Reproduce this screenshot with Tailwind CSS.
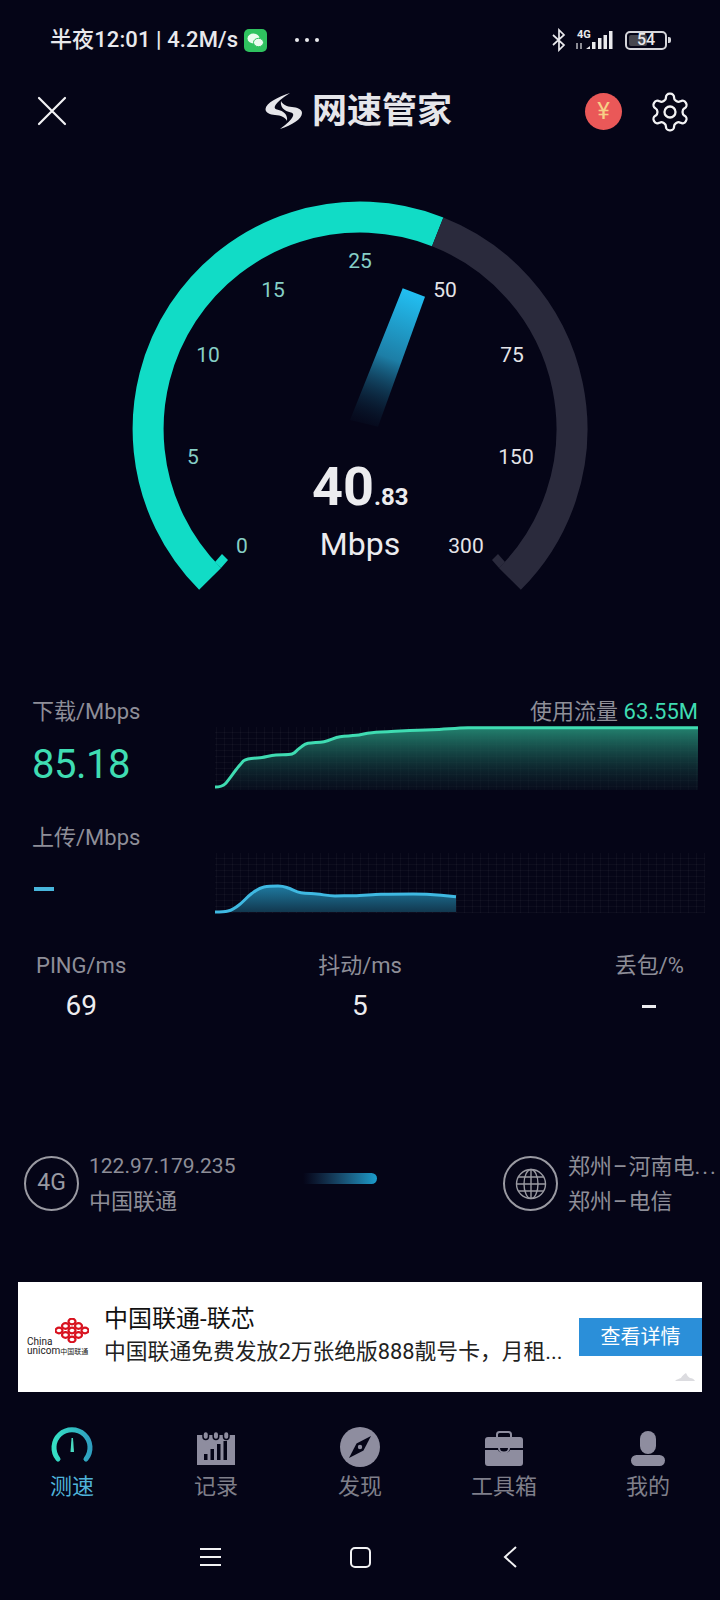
<!DOCTYPE html>
<html lang="zh-CN">
<head>
  <meta charset="UTF-8" />
  <meta name="viewport" content="width=device-width, initial-scale=1.0" />
  <title>网速管家</title>
  <script src="https://cdn.jsdelivr.net/npm/@tailwindcss/browser@4"></script>
</head>

<body class="bg-[#050517] font-['Roboto','Noto_Sans_CJK_SC',sans-serif]">
  <div class="w-[720px] h-[1600px] overflow-hidden flex flex-col">

    <!-- Status bar -->
    <div class="h-[80px] flex items-center pl-[50px] pr-[49px] text-[#e9e9ec]">
      <span class="text-[22px] font-medium leading-none whitespace-nowrap tracking-[0.1px]">半夜12:01 | 4.2M/s</span>
      <svg class="ml-[6px]" width="23" height="23" viewBox="0 0 23 23">
        <rect width="23" height="23" rx="5" fill="#2fc25f" />
        <ellipse cx="9.500" cy="9.500" rx="6" ry="5" fill="#eafbee" />
        <ellipse cx="14.500" cy="13.500" rx="5" ry="4.200" fill="#eafbee" stroke="#2fc25f" />
      </svg>
      <div class="ml-[28px] flex gap-[6px]">
        <span class="w-[4px] h-[4px] rounded-full bg-[#e9e9ec]"></span>
        <span class="w-[4px] h-[4px] rounded-full bg-[#e9e9ec]"></span>
        <span class="w-[4px] h-[4px] rounded-full bg-[#e9e9ec]"></span>
      </div>
      <div class="ml-auto flex items-center">
        <svg width="24" height="24" viewBox="0 0 24 24" fill="none" stroke="#e9e9ec" stroke-width="1.700">
          <path d="m6 7 11 10-5 5V2l5 5L6 17" />
        </svg>
        <svg class="ml-[3px]" width="40" height="22" viewBox="576 28 40 22">
          <text x="579" y="37" font-size="11" font-weight="700" fill="#e9e9ec">4G</text>
          <path d="M579 42v6M583 42v6" stroke="#b9b9c0" stroke-width="1.500" />
          <path d="M588 48h4v-3zM594 48h3.500v-7h-3.500zM600 48h3.500v-11h-3.500zM605.500 48h3.500v-14h-3.500zM611 48h3.500v-18h-3.500z" fill="#e9e9ec" />
        </svg>
        <div class="ml-[11px] relative w-[42px] h-[19px] rounded-[5px] border-2 border-[#d5d5da] flex items-center justify-center">
          <span class="absolute left-[2px] top-[2px] bottom-[2px] w-[18px] rounded-[2px] bg-[#46464e]"></span>
          <span class="relative text-[16px] font-medium leading-none">54</span>
        </div>
        <span class="ml-[1px] w-[3px] h-[6px] rounded-r-[2px] bg-[#d5d5da]"></span>
      </div>
    </div>

    <!-- Header -->
    <header class="h-[62px] flex items-center relative pl-[37px] pr-[28px]">
      <svg width="30" height="30" viewBox="0 0 30 30" fill="none" stroke="#f2f2f4" stroke-width="2.200" stroke-linecap="round">
        <path d="M2 2 28 28M28 2 2 28" />
      </svg>
      <div class="absolute left-[265px] top-[13px] flex items-center">
        <svg width="38" height="36" viewBox="265 93 38 36" fill="#e6e6ea">
          <path d="M290 93C278 97 266 103 265.500 109C265.500 113 270 114.500 275 115C281 115.500 285 117 287 121C288 115 284 111 277 109.500C273 108.500 273 104 290 93Z" />
          <path d="M280 129C292 125 302 119 302 113C302 109 297 107.500 292 107C287 106.500 283 105 281 101C280 107 284 111 291 112.500C295 113.500 295 118 280 129Z" />
        </svg>
        <span class="ml-[9px] text-[35px] font-bold leading-none text-[#e6e6ea] whitespace-nowrap">网速管家</span>
      </div>
      <div class="ml-auto flex items-center">
        <span class="w-[37px] h-[37px] rounded-full bg-[#ea5858] flex items-center justify-center text-[24px] leading-none text-[#f7cf86]">¥</span>
        <svg class="ml-[26px] mt-[2px]" width="44" height="44" viewBox="0 0 24 24" fill="none" stroke="#f2f2f4" stroke-width="1.250" stroke-linejoin="round">
          <path d="M12.220 2h-.44a2 2 0 0 0-2 2v.18a2 2 0 0 1-1 1.730l-.43.25a2 2 0 0 1-2 0l-.15-.08a2 2 0 0 0-2.730.73l-.22.38a2 2 0 0 0 .73 2.730l.15.1a2 2 0 0 1 1 1.720v.51a2 2 0 0 1-1 1.740l-.15.09a2 2 0 0 0-.73 2.730l.22.38a2 2 0 0 0 2.730.73l.15-.08a2 2 0 0 1 2 0l.43.25a2 2 0 0 1 1 1.730V20a2 2 0 0 0 2 2h.44a2 2 0 0 0 2-2v-.18a2 2 0 0 1 1-1.730l.43-.25a2 2 0 0 1 2 0l.15.08a2 2 0 0 0 2.730-.73l.22-.39a2 2 0 0 0-.73-2.730l-.15-.08a2 2 0 0 1-1-1.740v-.5a2 2 0 0 1 1-1.740l.15-.09a2 2 0 0 0 .73-2.730l-.22-.38a2 2 0 0 0-2.730-.73l-.15.08a2 2 0 0 1-2 0l-.43-.25a2 2 0 0 1-1-1.730V4a2 2 0 0 0-2-2z" />
          <circle cx="12" cy="12" r="3" />
        </svg>
      </div>
    </header>

    <!-- Gauge -->
    <svg class="mt-[48px] shrink-0" width="720" height="410" viewBox="0 190 720 410">
      <defs>
        <linearGradient id="needle" gradientUnits="userSpaceOnUse" x1="414" y1="292" x2="364" y2="424">
          <stop offset="0" stop-color="#22bff2" />
          <stop offset="0.5" stop-color="#1d7ea6" />
          <stop offset="1" stop-color="#0a1a30" stop-opacity="0.2" />
        </linearGradient>
      </defs>
      <path d="M210.100 578.900A212 212 0 0 1 437.700 231.800" fill="none" stroke="#11dcc6" stroke-width="31" />
      <path d="M437.700 231.800A212 212 0 0 1 509.900 578.900" fill="none" stroke="#2a2a3c" stroke-width="31" />
      <path d="M221 568 228 560 222 554 215 562Z" fill="#11dcc6" />
      <path d="M499 568 492 560 498 554 505 562Z" fill="#2a2a3c" />
      <polygon points="402.700,288.300 425,296.700 378,426.700 350,420" fill="url(#needle)" />
      <g font-size="21" text-anchor="middle" fill="#86cfc6">
        <text x="242" y="553">0</text>
        <text x="193" y="464">5</text>
        <text x="208" y="362">10</text>
        <text x="273" y="297">15</text>
        <text x="360" y="268">25</text>
      </g>
      <g font-size="21" text-anchor="middle" fill="#e4e4e8">
        <text x="445" y="297">50</text>
        <text x="512" y="362">75</text>
        <text x="516" y="464">150</text>
        <text x="466" y="553">300</text>
      </g>
      <text x="312" y="505" font-size="54" font-weight="700" fill="#ececef">40<tspan font-size="24">.83</tspan></text>
      <text x="360" y="555" font-size="32" text-anchor="middle" fill="#ececef">Mbps</text>
    </svg>

    <!-- Download -->
    <section class="mt-[100px] h-[90px] flex shrink-0">
      <div class="w-[215px] pl-[32px]">
        <div class="text-[22px] leading-[24px] text-[#8e8e98]">下载/Mbps</div>
        <div class="mt-[17px] text-[40px] leading-[48px] tracking-[-0.5px] text-[#3fdcb2]">85.18</div>
      </div>
      <div class="w-[483px]">
        <div class="text-right text-[22px] leading-[24px] text-[#8e8e98] whitespace-nowrap">使用流量 <span class="text-[#3fdcb2]">63.55M</span></div>
        <svg class="mt-[3px] overflow-visible" width="483" height="63" viewBox="215 727 483 63">
          <defs>
            <pattern id="grid1" width="8" height="6" patternUnits="userSpaceOnUse">
              <path d="M8 0H0V6" fill="none" stroke="#ffffff" stroke-opacity="0.06" />
            </pattern>
            <linearGradient id="fill1" x1="0" y1="0" x2="0" y2="1">
              <stop offset="0" stop-color="#23826f" />
              <stop offset="1" stop-color="#0b1824" stop-opacity="0.4" />
            </linearGradient>
          </defs>
          <rect x="215" y="727" width="483" height="63" fill="url(#grid1)" />
          <path d="M215 787C219 787 222 787 225 784S234 772 239 766 244 760 248 759 258 758 262 757.500 270 755.500 276 755 288 755 292 754 296 750.500 298.500 749 304 744 308 743.300 318 742.500 324 741.700 334 737.500 340 736.700 350 736 356 735.300 364 733.500 372 732.700 390 731.500 400 731 420 730 432 729.700 455 728 468 727.700H698V790H215Z" fill="url(#fill1)" />
          <path d="M215 787C219 787 222 787 225 784S234 772 239 766 244 760 248 759 258 758 262 757.500 270 755.500 276 755 288 755 292 754 296 750.500 298.500 749 304 744 308 743.300 318 742.500 324 741.700 334 737.500 340 736.700 350 736 356 735.300 364 733.500 372 732.700 390 731.500 400 731 420 730 432 729.700 455 728 468 727.700H698" fill="none" stroke="#3fdcb2" stroke-width="3" />
        </svg>
      </div>
    </section>

    <!-- Upload -->
    <section class="mt-[36px] h-[87px] flex shrink-0">
      <div class="w-[215px] pl-[32px]">
        <div class="text-[22px] leading-[24px] text-[#8e8e98]">上传/Mbps</div>
        <div class="mt-[37px] ml-[2px] w-[20px] h-[4px] bg-[#48b6dc]"></div>
      </div>
      <svg class="mt-[27px] overflow-visible" width="490" height="60" viewBox="215 853 490 60">
        <defs>
          <pattern id="grid2" width="8" height="6" patternUnits="userSpaceOnUse">
            <path d="M8 0H0V6" fill="none" stroke="#ffffff" stroke-opacity="0.06" />
          </pattern>
          <linearGradient id="fill2" x1="0" y1="0" x2="0" y2="1">
            <stop offset="0" stop-color="#1f7aa0" />
            <stop offset="1" stop-color="#12384f" />
          </linearGradient>
        </defs>
        <rect x="215" y="853" width="490" height="60" fill="url(#grid2)" />
        <path d="M215 912C221 912 224 912 228 911S234 909 239 905 247 897 252 893.300 259 888 264 887 272 886 278 886 285 887 289 888.300 296 892 301 892.700 311 893.500 317 894 328 896 335 896 346 895.700 354 895.700 372 894.500 381 894.300 403 894 413 894 432 894.500 441 895.300L456 896.700V912Z" fill="url(#fill2)" />
        <path d="M215 912C221 912 224 912 228 911S234 909 239 905 247 897 252 893.300 259 888 264 887 272 886 278 886 285 887 289 888.300 296 892 301 892.700 311 893.500 317 894 328 896 335 896 346 895.700 354 895.700 372 894.500 381 894.300 403 894 413 894 432 894.500 441 895.300L456 896.700" fill="none" stroke="#3fb9e2" stroke-width="3" />
      </svg>
    </section>

    <!-- Ping / jitter / loss -->
    <section class="mt-[41px] px-[36px] grid grid-cols-3 shrink-0">
      <div class="justify-self-start flex flex-col items-center">
        <div class="text-[22px] leading-[24px] text-[#8e8e98]">PING/ms</div>
        <div class="mt-[10px] text-[28px] leading-[36px] text-[#ececef]">69</div>
      </div>
      <div class="justify-self-center flex flex-col items-center">
        <div class="text-[22px] leading-[24px] text-[#8e8e98]">抖动/ms</div>
        <div class="mt-[10px] text-[28px] leading-[36px] text-[#ececef]">5</div>
      </div>
      <div class="justify-self-end flex flex-col items-center">
        <div class="text-[22px] leading-[24px] text-[#8e8e98]">丢包/%</div>
        <div class="mt-[10px] h-[36px] flex items-center"><span class="block w-[14px] h-[3px] bg-[#ececef]"></span></div>
      </div>
    </section>

    <!-- Client / server -->
    <section class="mt-[132px] h-[55px] flex items-center shrink-0 text-[21px] text-[#8e8e98] whitespace-nowrap">
      <div class="w-[303px] pl-[24px] flex items-center">
        <div class="w-[55px] h-[55px] rounded-full border-2 border-[#9a9aa2] flex items-center justify-center text-[23px] text-[#9a9aa2]">4G</div>
        <div class="ml-[10px] flex flex-col gap-[10px] leading-[25px]">
          <span>122.97.179.235</span>
          <span class="text-[22px]">中国联通</span>
        </div>
      </div>
      <div class="w-[74px] h-[11px] -mt-[10px] rounded-r-full bg-gradient-to-r from-[#050517] to-[#1b9ccb]"></div>
      <div class="ml-[126px] w-[55px] h-[55px] rounded-full border-2 border-[#9a9aa2] flex items-center justify-center">
        <svg width="32" height="32" viewBox="0 0 32 32" fill="none" stroke="#9a9aa2" stroke-width="1.400">
          <circle cx="16" cy="16" r="14.500" />
          <ellipse cx="16" cy="16" rx="7" ry="14.500" />
          <path d="M16 1.500V30.500M3.500 9H28.500M1.500 16H30.500M3.500 23H28.500" />
        </svg>
      </div>
      <div class="ml-[10px] flex flex-col gap-[10px] leading-[25px] text-[22px]">
        <span>郑州<span class="mx-[1px]">–</span>河南电<span class="tracking-[2px]">...</span></span>
        <span>郑州<span class="mx-[1px]">–</span>电信</span>
      </div>
    </section>

    <!-- Ad -->
    <section class="mt-[71px] ml-[18px] w-[684px] h-[110px] bg-white flex items-center relative shrink-0">
      <div class="w-[87px] pl-[9px] shrink-0 flex flex-col">
        <svg class="ml-[28px]" width="34" height="25" viewBox="-17 -12.500 34 25" fill="none" stroke="#d8121f" stroke-width="2.200">
          <ellipse cx="0" cy="-9" rx="3.500" ry="2.800" />
          <ellipse cx="-6.500" cy="-4.500" rx="3.500" ry="2.800" />
          <ellipse cx="6.500" cy="-4.500" rx="3.500" ry="2.800" />
          <ellipse cx="-13" cy="0" rx="3.500" ry="2.800" />
          <ellipse cx="0" cy="0" rx="3.500" ry="2.800" />
          <ellipse cx="13" cy="0" rx="3.500" ry="2.800" />
          <ellipse cx="-6.500" cy="4.500" rx="3.500" ry="2.800" />
          <ellipse cx="6.500" cy="4.500" rx="3.500" ry="2.800" />
          <ellipse cx="0" cy="9" rx="3.500" ry="2.800" />
        </svg>
        <div class="-mt-[6px] text-[10px] leading-[9px] text-[#222]">China</div>
        <div class="text-[10px] leading-[10px] text-[#222] whitespace-nowrap">unicom<span class="text-[7px]">中国联通</span></div>
      </div>
      <div class="w-[474px] -mt-[4px] -ml-[1px] shrink-0">
        <div class="text-[24px] leading-[33px] text-[#111]">中国联通-联芯</div>
        <div class="text-[21.800px] leading-[32px] text-[#222] whitespace-nowrap">中国联通免费发放2万张绝版888靓号卡，月租...</div>
      </div>
      <div class="ml-[1px] w-[123px] h-[38px] bg-[#2b8fd9] text-white text-[20px] flex items-center justify-center shrink-0">查看详情</div>
      <svg class="absolute right-[7px] bottom-[11px]" width="20" height="8" viewBox="0 0 20 8" fill="#dcdce0">
        <path d="M0 8C2 6 4 6 6 5 7 3 9 1 11 0 12 2 13 4 15 5 17 5 19 6 20 8Z" />
      </svg>
    </section>

    <!-- Tabs -->
    <nav class="mt-[33px] grid grid-cols-5 shrink-0">
      <div class="flex flex-col items-center">
        <svg width="44" height="42" viewBox="0 0 44 42" fill="none">
          <defs>
            <linearGradient id="tabgauge" x1="0" y1="0" x2="1" y2="0">
              <stop offset="0" stop-color="#35e0c4" />
              <stop offset="1" stop-color="#2f9fc0" />
            </linearGradient>
          </defs>
          <path d="M8 34A18 18 0 1 1 36 34" stroke="url(#tabgauge)" stroke-width="5" stroke-linecap="round" />
          <path d="M21.500 13H23L24 27H20.500Z" fill="#49d9c0" />
        </svg>
        <span class="mt-[6px] text-[22px] leading-[28px] text-[#4fb3da]">测速</span>
      </div>
      <div class="flex flex-col items-center">
        <svg width="40" height="42" viewBox="0 0 40 42">
          <rect x="1" y="10" width="38" height="30" fill="#8e8d9f" />
          <rect x="7" y="6.500" width="5.500" height="8" rx="2.700" fill="#8e8d9f" stroke="#050517" stroke-width="1.500" />
          <rect x="17.200" y="6.500" width="5.500" height="8" rx="2.700" fill="#8e8d9f" stroke="#050517" stroke-width="1.500" />
          <rect x="27.500" y="6.500" width="5.500" height="8" rx="2.700" fill="#8e8d9f" stroke="#050517" stroke-width="1.500" />
          <path d="M8 29h3.500v6H8ZM14.500 24H18v11h-3.500ZM21 19h3.500v16H21ZM27.500 16H31v19h-3.500Z" fill="#050517" />
        </svg>
        <span class="mt-[6px] text-[22px] leading-[28px] text-[#7f7f8a]">记录</span>
      </div>
      <div class="flex flex-col items-center">
        <svg width="40" height="42" viewBox="0 0 40 42">
          <circle cx="20" cy="22" r="20" fill="#8e8d9f" />
          <path d="M31 11 23.500 25.500 9 33 16.500 18.500Z" fill="#050517" />
          <circle cx="20" cy="22" r="2.200" fill="#8e8d9f" />
        </svg>
        <span class="mt-[6px] text-[22px] leading-[28px] text-[#7f7f8a]">发现</span>
      </div>
      <div class="flex flex-col items-center">
        <svg width="40" height="42" viewBox="0 0 40 42" fill="#8e8d9f">
          <path d="M13 13V9.500A2.500 2.500 0 0 1 15.500 7h9A2.500 2.500 0 0 1 27 9.500V13" fill="none" stroke="#8e8d9f" stroke-width="2" />
          <path d="M4 12h32a3 3 0 0 1 3 3v8H1v-8a3 3 0 0 1 3-3Z" />
          <path d="M1 25h13c1 4 11 4 12 0h13v13a3 3 0 0 1-3 3H4a3 3 0 0 1-3-3Z" />
          <path d="M15 23c0 6 10 6 10 0" fill="none" stroke="#8e8d9f" stroke-width="2" />
        </svg>
        <span class="mt-[6px] text-[22px] leading-[28px] text-[#7f7f8a]">工具箱</span>
      </div>
      <div class="flex flex-col items-center">
        <svg width="36" height="42" viewBox="0 0 36 42" fill="#8e8d9f">
          <rect x="10" y="6" width="16" height="23" rx="8" />
          <rect x="1" y="30" width="34" height="11" rx="5.500" />
        </svg>
        <span class="mt-[6px] text-[22px] leading-[28px] text-[#7f7f8a]">我的</span>
      </div>
    </nav>

    <!-- System nav -->
    <div class="mt-[45px] mx-auto w-[450px] grid grid-cols-3 justify-items-center items-center shrink-0">
      <svg width="22" height="20" viewBox="0 0 22 20" stroke="#f2f2f4" stroke-width="2">
        <path d="M1 2H22M1 10H22M1 18H22" />
      </svg>
      <span class="block w-[21px] h-[21px] rounded-[5px] border-[2.500px] border-[#f2f2f4]"></span>
      <svg width="14" height="22" viewBox="0 0 14 22" fill="none" stroke="#f2f2f4" stroke-width="2">
        <path d="M13 1 2 11 13 21" />
      </svg>
    </div>
  </div>
</body>
</html>
